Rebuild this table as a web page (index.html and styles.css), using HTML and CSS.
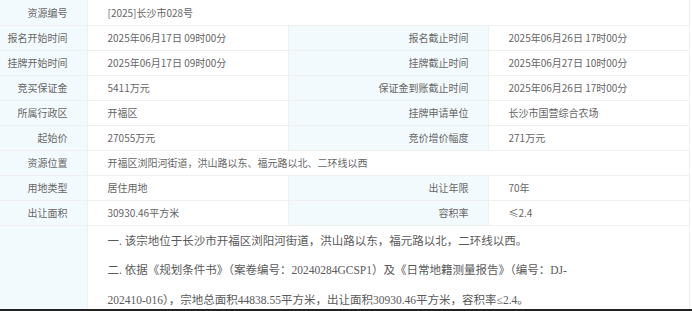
FILE: index.html
```html
<!DOCTYPE html>
<html lang="zh">
<head>
<meta charset="utf-8">
<link rel="stylesheet" href="styles.css">
</head>
<body>
<table class="info">
  <colgroup>
    <col class="c-label"><col class="c-value"><col class="c-label2"><col class="c-value">
  </colgroup>
  <tr><td class="lbl">资源编号</td><td class="val" colspan="3">[2025]长沙市028号</td></tr>
  <tr><td class="lbl">报名开始时间</td><td class="val">2025年06月17日 09时00分</td><td class="lbl">报名截止时间</td><td class="val">2025年06月26日 17时00分</td></tr>
  <tr><td class="lbl">挂牌开始时间</td><td class="val">2025年06月17日 09时00分</td><td class="lbl">挂牌截止时间</td><td class="val">2025年06月27日 10时00分</td></tr>
  <tr><td class="lbl">竞买保证金</td><td class="val">5411万元</td><td class="lbl">保证金到账截止时间</td><td class="val">2025年06月26日 17时00分</td></tr>
  <tr><td class="lbl">所属行政区</td><td class="val">开福区</td><td class="lbl">挂牌申请单位</td><td class="val">长沙市国营综合农场</td></tr>
  <tr><td class="lbl">起始价</td><td class="val">27055万元</td><td class="lbl">竞价增价幅度</td><td class="val">271万元</td></tr>
  <tr><td class="lbl">资源位置</td><td class="val" colspan="3">开福区浏阳河街道，洪山路以东、福元路以北、二环线以西</td></tr>
  <tr><td class="lbl">用地类型</td><td class="val">居住用地</td><td class="lbl">出让年限</td><td class="val">70年</td></tr>
  <tr><td class="lbl">出让面积</td><td class="val">30930.46平方米</td><td class="lbl">容积率</td><td class="val">≤2.4</td></tr>
  <tr class="notes">
    <td class="lbl"></td>
    <td class="desc" colspan="3">
      <p>一. 该宗地位于长沙市开福区浏阳河街道，洪山路以东，福元路以北，二环线以西。</p>
      <p>二. 依据《规划条件书》（案卷编号：20240284GCSP1）及《日常地籍测量报告》（编号：DJ-<span class="nb">202410-016），</span>宗地总面积44838.55平方米，出让面积30930.46平方米，容积率≤2.4。</p>
    </td>
  </tr>
</table>
<div class="edge"></div>
</body>
</html>
```

FILE: styles.css
```css
html, body {
  margin: 0;
  padding: 0;
  background: #fff;
  overflow: hidden;
}
body {
  width: 692px;
  height: 311px;
  font-family: "Noto Sans CJK SC", "Noto Sans", sans-serif;
}
.info {
  border-collapse: collapse;
  table-layout: fixed;
  width: 689px;
  font-size: 10px;
  color: #666;
}
.c-label { width: 87px; }
.c-value { width: 201px; }
.c-label2 { width: 200px; }
.info tr { height: 25px; }
.info td {
  border: 1px solid #f0f0f0;
  padding: 0;
  white-space: nowrap;
}
.info tr:first-child td { border-top: none; }
.info td:first-child { border-left: none; }
.lbl {
  background: #f3fafd;
  text-align: right;
  padding-right: 19px !important;
}
.val {
  padding-left: 20px !important;
}
.notes td { vertical-align: top; border-bottom: none; }
.desc {
  white-space: normal !important;
  padding: 1px 80px 0 20px !important;
  font-family: "Liberation Serif", "Noto Sans CJK SC", serif;
  font-size: 11.5px;
  line-height: 29.5px;
  color: #5a5a5a;
}
.desc p { margin: 0; }
.nb { white-space: nowrap; }
.edge {
  position: fixed;
  left: 0;
  right: 0;
  bottom: 0;
  height: 2px;
  background: #222;
}
```
